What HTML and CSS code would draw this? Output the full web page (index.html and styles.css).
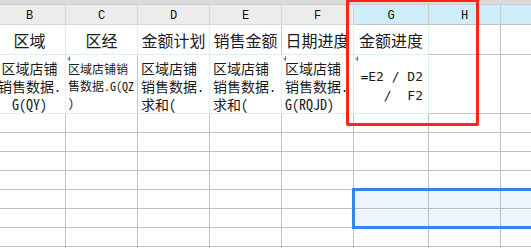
FILE: index.html
```html
<!DOCTYPE html>
<html lang="zh-CN">
<head>
<meta charset="utf-8">
<title>销售进度</title>
<link rel="stylesheet" href="styles.css">
</head>
<body>
<div class="sheet">
  <div class="band"></div>
  <div class="grid">
    <!-- column headers -->
    <div class="cell hd">B</div>
    <div class="cell hd">C</div>
    <div class="cell hd">D</div>
    <div class="cell hd">E</div>
    <div class="cell hd">F</div>
    <div class="cell hd sel">G</div>
    <div class="cell hd sel">H</div>
    <div class="cell hd sel"></div>

    <!-- row 1: field titles -->
    <div class="cell tbl title">区域</div>
    <div class="cell tbl title">区经</div>
    <div class="cell tbl title">金额计划</div>
    <div class="cell tbl title">销售金额</div>
    <div class="cell tbl title">日期进度</div>
    <div class="cell tbl title">金额进度</div>
    <div class="cell"></div>
    <div class="cell"></div>

    <!-- row 2: field formulas -->
    <div class="cell tbl data center">区域店铺<br>销售数据.<br>G(QY)</div>
    <div class="cell tbl data small"><span class="pin"></span>区域店铺销<br>售数据.G(QZ<br>)</div>
    <div class="cell tbl data">区域店铺<br>销售数据.<br>求和(</div>
    <div class="cell tbl data">区域店铺<br>销售数据.<br>求和(</div>
    <div class="cell tbl data"><span class="pin"></span>区域店铺<br>销售数据.<br>G(RQJD)</div>
    <div class="cell tbl data formula"><span class="pin"></span>=E2 / D2<br>/&nbsp;&nbsp;F2</div>
    <div class="cell"></div>
    <div class="cell"></div>

    <!-- empty rows -->
    <div class="cell"></div><div class="cell"></div><div class="cell"></div><div class="cell"></div><div class="cell"></div><div class="cell"></div><div class="cell"></div><div class="cell"></div>
    <div class="cell"></div><div class="cell"></div><div class="cell"></div><div class="cell"></div><div class="cell"></div><div class="cell"></div><div class="cell"></div><div class="cell"></div>
    <div class="cell"></div><div class="cell"></div><div class="cell"></div><div class="cell"></div><div class="cell"></div><div class="cell"></div><div class="cell"></div><div class="cell"></div>
    <div class="cell"></div><div class="cell"></div><div class="cell"></div><div class="cell"></div><div class="cell"></div><div class="cell"></div><div class="cell"></div><div class="cell"></div>
    <div class="cell"></div><div class="cell"></div><div class="cell"></div><div class="cell"></div><div class="cell"></div><div class="cell"></div><div class="cell"></div><div class="cell"></div>
    <div class="cell"></div><div class="cell"></div><div class="cell"></div><div class="cell"></div><div class="cell"></div><div class="cell"></div><div class="cell"></div><div class="cell"></div>
    <div class="cell"></div><div class="cell"></div><div class="cell"></div><div class="cell"></div><div class="cell"></div><div class="cell"></div><div class="cell"></div><div class="cell"></div>
    <div class="cell"></div><div class="cell"></div><div class="cell"></div><div class="cell"></div><div class="cell"></div><div class="cell"></div><div class="cell"></div><div class="cell"></div>
  </div>

  <!-- highlight around the progress column -->
  <div class="mark"></div>
  <!-- current selection -->
  <div class="selection"></div>
</div>
</body>
</html>
```
FILE: styles.css
```css
* { box-sizing: border-box; }

html, body {
  margin: 0;
  padding: 0;
  background: #ffffff;
  overflow: hidden;
}

.sheet {
  position: relative;
  width: 531px;
  height: 248px;
  overflow: hidden;
}

.band {
  height: 5px;
  background: #dadada;
  border-bottom: 1px solid #cbcbcb;
}

.grid {
  display: grid;
  grid-template-columns: 72px 72px 72px 72px 72px 75px 72px 72px;
  grid-template-rows: 20px 30px 59px repeat(8, 19px);
  margin-left: -6px;
  font-family: "Noto Sans CJK SC", sans-serif;
  color: #1b1b1b;
}

.cell {
  position: relative;
  border-right: 1px solid #c2c2c2;
  border-bottom: 1px solid #c2c2c2;
  overflow: hidden;
}

/* column letters */
.hd {
  background: #ececec;
  border-right-color: #d3d3d3;
  border-bottom-color: #d3dcdb;
  font-family: "Liberation Mono", monospace;
  font-size: 12px;
  line-height: 19px;
  padding-top: 2px;
  text-align: center;
  color: #111;
}

.hd.sel {
  background: #cdeefa;
  border-right-color: #c6c6c6;
  border-bottom-color: #c4c4c4;
}

/* table range with the light teal rules */
.tbl {
  border-right-color: #dcf2ee;
  border-bottom-color: #dcf2ee;
}

.tbl:nth-child(6n) { border-right-color: #c6c6c6; }

.title {
  display: flex;
  align-items: center;
  justify-content: center;
  font-size: 16px;
  line-height: 20px;
  white-space: nowrap;
  padding-top: 1px;
}

.data {
  display: flex;
  flex-direction: column;
  justify-content: center;
  padding: 3px 0 0 3px;
  font-family: "Noto Sans Mono CJK SC", "Noto Sans CJK SC", sans-serif;
  font-size: 14px;
  line-height: 18px;
  white-space: nowrap;
}

.data.center {
  text-align: center;
  padding-left: 0;
}

.data.small {
  font-size: 12px;
  line-height: 17px;
  padding-left: 2px;
}

.data.formula {
  font-family: "DejaVu Sans Mono", monospace;
  font-size: 13px;
  line-height: 19px;
  text-align: right;
  padding: 4px 5px 0 0;
}

/* small anchor glyph in the cell corner */
.pin {
  position: absolute;
  left: 1px;
  top: 1px;
  width: 5px;
  height: 6px;
}

.pin::before {
  content: "";
  position: absolute;
  left: 2px;
  top: 0;
  width: 1px;
  height: 5px;
  background: #8d8d8d;
}

.pin::after {
  content: "";
  position: absolute;
  left: 0;
  top: 2px;
  border-left: 2.5px solid transparent;
  border-right: 2.5px solid transparent;
  border-top: 3px solid #8d8d8d;
}

.mark {
  position: absolute;
  left: 346px;
  top: -1px;
  width: 133px;
  height: 127px;
  border: 3px solid #ff2418;
  border-radius: 2px;
}

.selection {
  position: absolute;
  left: 352px;
  top: 188px;
  width: 200px;
  height: 41px;
  border: 3px solid #3385f0;
  background: rgba(51, 133, 240, 0.09);
}
```
